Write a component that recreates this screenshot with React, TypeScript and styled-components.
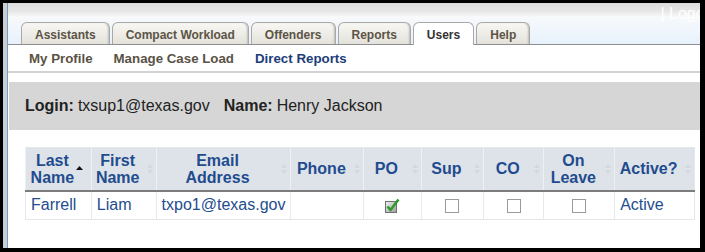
import React from "react";
import styled, { createGlobalStyle } from "styled-components";

const Global = createGlobalStyle`
  html, body { margin: 0; padding: 0; background: #000; }
  body { font-family: "Liberation Sans", Arial, sans-serif; }
  * { box-sizing: border-box; }
`;

const Frame = styled.div`
  width: 697px;
  height: 245px;
  margin: 3px 0 0 3px;
  background: #fff;
  border-left: 4px solid #cdcdcd;
  overflow: hidden;
`;

const Inner = styled.div`
  height: 100%;
  border-left: 1px solid #6a9fd6;
  display: flex;
  flex-direction: column;
`;

const Header = styled.div`
  position: relative;
  height: 42px;
  background: linear-gradient(#dcdcdc 0px, #e6e6e6 8px, #f7f9fb 14px, #eef5fc 30px, #e6f1fc 42px);
  border-bottom: 1px solid #8f8f8f;
  display: flex;
  align-items: flex-end;
  padding-left: 13px;
  gap: 2px;
`;

const Logout = styled.span`
  position: absolute;
  top: 2px;
  right: -18px;
  font-size: 16px;
  color: #fff;
  white-space: nowrap;
`;

const Tab = styled.div<{ $active?: boolean }>`
  height: ${(p) => (p.$active ? 23 : 22)}px;
  margin-bottom: ${(p) => (p.$active ? -1 : 0)}px;
  padding: 2px 13px 0;
  display: flex;
  align-items: center;
  font-size: 12px;
  font-weight: bold;
  color: ${(p) => (p.$active ? "#333" : "#5c5446")};
  border: 1px solid #a9a9a9;
  border-bottom: none;
  border-radius: 6px 6px 0 0;
  background: ${(p) =>
    p.$active ? "#fff" : "linear-gradient(#f8f7f3, #e4e2db)"};
  box-shadow: ${(p) => (p.$active ? "none" : "inset -2px 0 2px -1px #bdbab2")};
`;

const SubNav = styled.div`
  height: 28px;
  border-bottom: 2px solid #d3d3d3;
  display: flex;
  align-items: center;
  padding-left: 21px;
  gap: 21px;
`;

const SubLink = styled.span<{ $current?: boolean }>`
  font-size: 13.3px;
  font-weight: bold;
  color: ${(p) => (p.$current ? "#1d3d7a" : "#5a5244")};
`;

const LoginBar = styled.div`
  margin: 9px 0 0 1px;
  height: 48px;
  background: #d6d6d6;
  display: flex;
  align-items: center;
  padding-left: 16px;
  font-size: 16px;
  color: #222;
`;

const Label = styled.b`
  margin-right: 4px;
`;

const Value = styled.span`
  margin-right: 14px;
`;

const Table = styled.table`
  margin: 17px 0 0 17px;
  width: 670px;
  border-collapse: collapse;
  border: 1px solid #e3e6ea;
  font-size: 16px;
`;

const Th = styled.th<{ $w: number }>`
  position: relative;
  width: ${(p) => p.$w}px;
  height: 43px;
  background: #dee3e9;
  color: #1f4c8e;
  font-weight: bold;
  line-height: 17px;
  text-align: center;
  padding: 0 13px 0 1px;
  border-left: 1px solid #eef1f4;
  border-bottom: 2px solid #7c7c7c;
`;

const SortIcon = styled.svg<{ $on?: boolean }>`
  position: absolute;
  right: ${(p) => (p.$on ? 8 : 3)}px;
  top: 50%;
  transform: translateY(-50%);
  fill: ${(p) => (p.$on ? "#111" : "#d2d8de")};
`;

const Td = styled.td<{ $center?: boolean }>`
  height: 29px;
  color: #234d8e;
  padding: 0 5px;
  text-align: ${(p) => (p.$center ? "center" : "left")};
  border-left: 1px solid #e6e9ed;
  border-bottom: 1px solid #e3e6ea;
  vertical-align: middle;
  white-space: nowrap;
`;

const Box = styled.span`
  display: inline-block;
  width: 14px;
  height: 14px;
  border: 1px solid #9a9a9a;
  background: #fff;
  vertical-align: middle;
`;

const CheckedBox = () => (
  <svg width="16" height="16" viewBox="0 0 16 16" style={{ verticalAlign: "middle" }}>
    <defs>
      <linearGradient id="cb" x1="0" y1="0" x2="1" y2="1">
        <stop offset="0" stopColor="#f2f2f2" />
        <stop offset="1" stopColor="#9c9c9c" />
      </linearGradient>
    </defs>
    <rect x="1.5" y="3.5" width="11" height="11" fill="url(#cb)" stroke="#6f6f6f" />
    <path d="M3.5 8.5 L6.5 12 L14.5 1.5" fill="none" stroke="#2e9b2e" strokeWidth="2.6" strokeLinejoin="round" />
  </svg>
);

const Sort = ({ on }: { on?: boolean }) =>
  on ? (
    <SortIcon $on width="7" height="5" viewBox="0 0 7 5" style={{ marginTop: -1 }}>
      <path d="M0 4.5 L3.5 0.5 L7 4.5 Z" />
    </SortIcon>
  ) : (
    <SortIcon width="6" height="12" viewBox="0 0 6 12">
      <path d="M0 5 L3 1 L6 5 Z M0 7 L3 11 L6 7 Z" />
    </SortIcon>
  );

const cols: [string[], number, boolean?][] = [
  [["Last", "Name"], 66, true],
  [["First", "Name"], 65],
  [["Email", "Address"], 133],
  [["Phone"], 73],
  [["PO"], 58],
  [["Sup"], 63],
  [["CO"], 61],
  [["On", "Leave"], 71],
  [["Active?"], 80],
];

export default function App() {
  return (
    <>
      <Global />
      <Frame>
        <Inner>
          <Header>
            <Logout>| Logout</Logout>
            <Tab>Assistants</Tab>
            <Tab>Compact Workload</Tab>
            <Tab>Offenders</Tab>
            <Tab>Reports</Tab>
            <Tab $active>Users</Tab>
            <Tab>Help</Tab>
          </Header>
          <SubNav>
            <SubLink>My Profile</SubLink>
            <SubLink>Manage Case Load</SubLink>
            <SubLink $current>Direct Reports</SubLink>
          </SubNav>
          <LoginBar>
            <Label>Login:</Label>
            <Value>txsup1@texas.gov</Value>
            <Label>Name:</Label>
            <span>Henry Jackson</span>
          </LoginBar>
          <Table>
            <thead>
              <tr>
                {cols.map(([lines, w, on]) => (
                  <Th key={lines.join(" ")} $w={w}>
                    {lines.map((l, i) => (
                      <React.Fragment key={l}>
                        {i > 0 && <br />}
                        {l}
                      </React.Fragment>
                    ))}
                    <Sort on={on} />
                  </Th>
                ))}
              </tr>
            </thead>
            <tbody>
              <tr>
                <Td>Farrell</Td>
                <Td>Liam</Td>
                <Td>txpo1@texas.gov</Td>
                <Td></Td>
                <Td $center><CheckedBox /></Td>
                <Td $center><Box /></Td>
                <Td $center><Box /></Td>
                <Td $center><Box /></Td>
                <Td>Active</Td>
              </tr>
            </tbody>
          </Table>
        </Inner>
      </Frame>
    </>
  );
}
